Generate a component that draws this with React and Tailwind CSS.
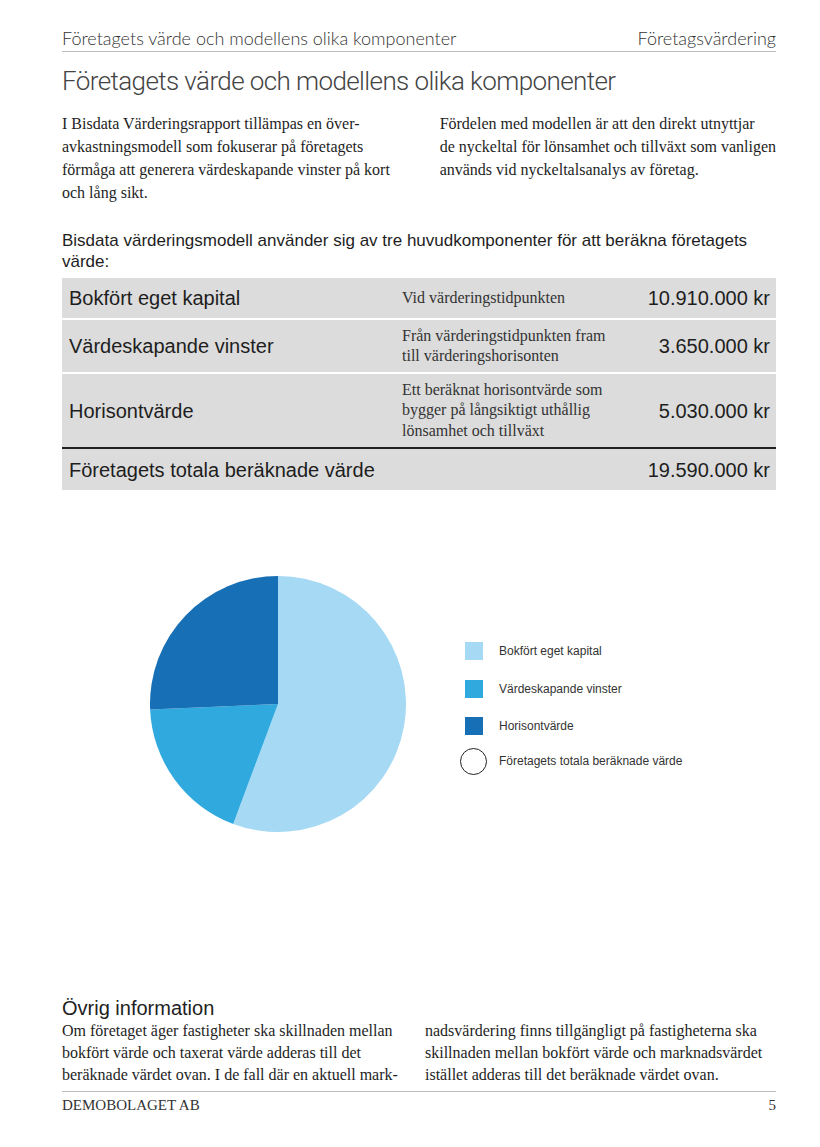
import React from "react";

const sans = { fontFamily: '"Liberation Sans", Arial, sans-serif' };
const serif = { fontFamily: '"Liberation Serif", "Times New Roman", serif' };

// tårtdiagrammets andelar (värden i tkr)
const slices = [
  { value: 10910, color: "#a5d9f4" },
  { value: 3650, color: "#30a9de" },
  { value: 5030, color: "#176fb5" },
];

function point(angle, r, c) {
  const rad = (angle * Math.PI) / 180;
  return [c + r * Math.sin(rad), c - r * Math.cos(rad)];
}

function Pie() {
  const total = slices.reduce((s, x) => s + x.value, 0);
  const r = 128;
  const c = 128;
  let start = 0;
  return (
    <svg width="256" height="256" viewBox="0 0 256 256">
      {slices.map((s, i) => {
        const sweep = (s.value / total) * 360;
        const end = start + sweep;
        const [x1, y1] = point(start, r, c);
        const [x2, y2] = point(end, r, c);
        const large = sweep > 180 ? 1 : 0;
        const d = `M${c},${c} L${x1},${y1} A${r},${r} 0 ${large} 1 ${x2},${y2} Z`;
        start = end;
        return <path key={i} d={d} fill={s.color} />;
      })}
    </svg>
  );
}

const rows = [
  {
    label: "Bokfört eget kapital",
    desc: ["Vid värderingstidpunkten"],
    value: "10.910.000 kr",
    h: "h-[40px]",
  },
  {
    label: "Värdeskapande vinster",
    desc: ["Från värderingstidpunkten fram", "till värderingshorisonten"],
    value: "3.650.000 kr",
    h: "h-[52px]",
  },
  {
    label: "Horisontvärde",
    desc: ["Ett beräknat horisontvärde som", "bygger på långsiktigt uthållig", "lönsamhet och tillväxt"],
    value: "5.030.000 kr",
    h: "h-[73px]",
  },
];

const legend = [
  { label: "Bokfört eget kapital", color: "bg-[#a5d9f4]", h: "h-[38px]" },
  { label: "Värdeskapande vinster", color: "bg-[#30a9de]", h: "h-[38px]" },
  { label: "Horisontvärde", color: "bg-[#176fb5]", h: "h-[36px]" },
];

export default function App() {
  return (
    <div className="min-h-[1147px] bg-white text-[#1e1e1e]">
      <div className="ml-[62px] w-[714px]">
        {/* sidhuvud */}
        <div
          className="flex justify-between items-end pt-[27px] pb-[2px] border-b border-[#bcbcbc] text-[18px] leading-[22px] font-light text-[#333]"
          style={{ fontFamily: 'Lato, "Open Sans", sans-serif' }}
        >
          <span>Företagets värde och modellens olika komponenter</span>
          <span>Företagsvärdering</span>
        </div>

        <h1
          className="mt-[13px] text-[26px] leading-[32px] font-light tracking-[-0.6px] text-[#444] whitespace-nowrap"
          style={{ fontFamily: 'Roboto, "Liberation Sans", sans-serif' }}
        >
          Företagets värde och modellens olika komponenter
        </h1>

        <div className="mt-[15px] flex text-[16px] leading-[23px] whitespace-nowrap" style={serif}>
          <div className="w-[379px]">
            I Bisdata Värderingsrapport tillämpas en över-
            <br />
            avkastningsmodell som fokuserar på företagets
            <br />
            förmåga att generera värdeskapande vinster på kort
            <br />
            och lång sikt.
          </div>
          <div>
            Fördelen med modellen är att den direkt utnyttjar
            <br />
            de nyckeltal för lönsamhet och tillväxt som vanligen
            <br />
            används vid nyckeltalsanalys av företag.
          </div>
        </div>

        <p className="mt-[26px] text-[17px] leading-[21px] whitespace-nowrap" style={sans}>
          Bisdata värderingsmodell använder sig av tre huvudkomponenter för att beräkna företagets
          <br />
          värde:
        </p>

        {/* komponenttabell */}
        <div className="mt-[6px] flex flex-col gap-[2px]">
          {rows.map((r) => (
            <div key={r.label} className={`flex items-center bg-[#dcdcdc] pl-[7px] pr-[6px] ${r.h}`}>
              <div className="w-[333px] text-[20px] leading-[24px]" style={sans}>
                {r.label}
              </div>
              <div className="flex-1 text-[16px] leading-[20.5px] text-[#333] whitespace-nowrap" style={serif}>
                {r.desc.map((d) => (
                  <div key={d}>{d}</div>
                ))}
              </div>
              <div className="text-[20px] leading-[24px] text-right" style={sans}>
                {r.value}
              </div>
            </div>
          ))}
        </div>
        <div className="flex items-center h-[43px] bg-[#dcdcdc] border-t-2 border-[#222] pl-[7px] pr-[6px]" style={sans}>
          <div className="flex-1 text-[20px] leading-[24px]">Företagets totala beräknade värde</div>
          <div className="text-[20px] leading-[24px]">19.590.000 kr</div>
        </div>

        {/* diagram */}
        <div className="mt-[86px] flex items-start">
          <div className="ml-[88px]">
            <Pie />
          </div>
          <div className="ml-[54px] mt-[56px] flex flex-col text-[12px] text-[#333]" style={sans}>
            {legend.map((l) => (
              <div key={l.label} className={`flex items-center ${l.h}`}>
                <div className="w-[39px] flex">
                  <div className={`ml-[5px] w-[18px] h-[18px] ${l.color}`} />
                </div>
                <span>{l.label}</span>
              </div>
            ))}
            <div className="flex items-center h-[34px]">
              <div className="w-[39px] flex">
                <div className="w-[27px] h-[27px] rounded-full border-[1.5px] border-[#222]" />
              </div>
              <span>Företagets totala beräknade värde</span>
            </div>
          </div>
        </div>

        {/* övrig information */}
        <h2 className="mt-[164px] text-[20px] leading-[24px] text-[#222]" style={sans}>
          Övrig information
        </h2>
        <div className="flex text-[16px] leading-[22px] whitespace-nowrap" style={serif}>
          <div className="w-[363px]">
            Om företaget äger fastigheter ska skillnaden mellan
            <br />
            bokfört värde och taxerat värde adderas till det
            <br />
            beräknade värdet ovan. I de fall där en aktuell mark-
          </div>
          <div>
            nadsvärdering finns tillgängligt på fastigheterna ska
            <br />
            skillnaden mellan bokfört värde och marknadsvärdet
            <br />
            istället adderas till det beräknade värdet ovan.
          </div>
        </div>

        {/* sidfot */}
        <div
          className="mt-[5px] pt-[3px] border-t border-[#bcbcbc] flex justify-between text-[15px] leading-[20px] text-[#333]"
          style={serif}
        >
          <span>DEMOBOLAGET AB</span>
          <span>5</span>
        </div>
      </div>
    </div>
  );
}
